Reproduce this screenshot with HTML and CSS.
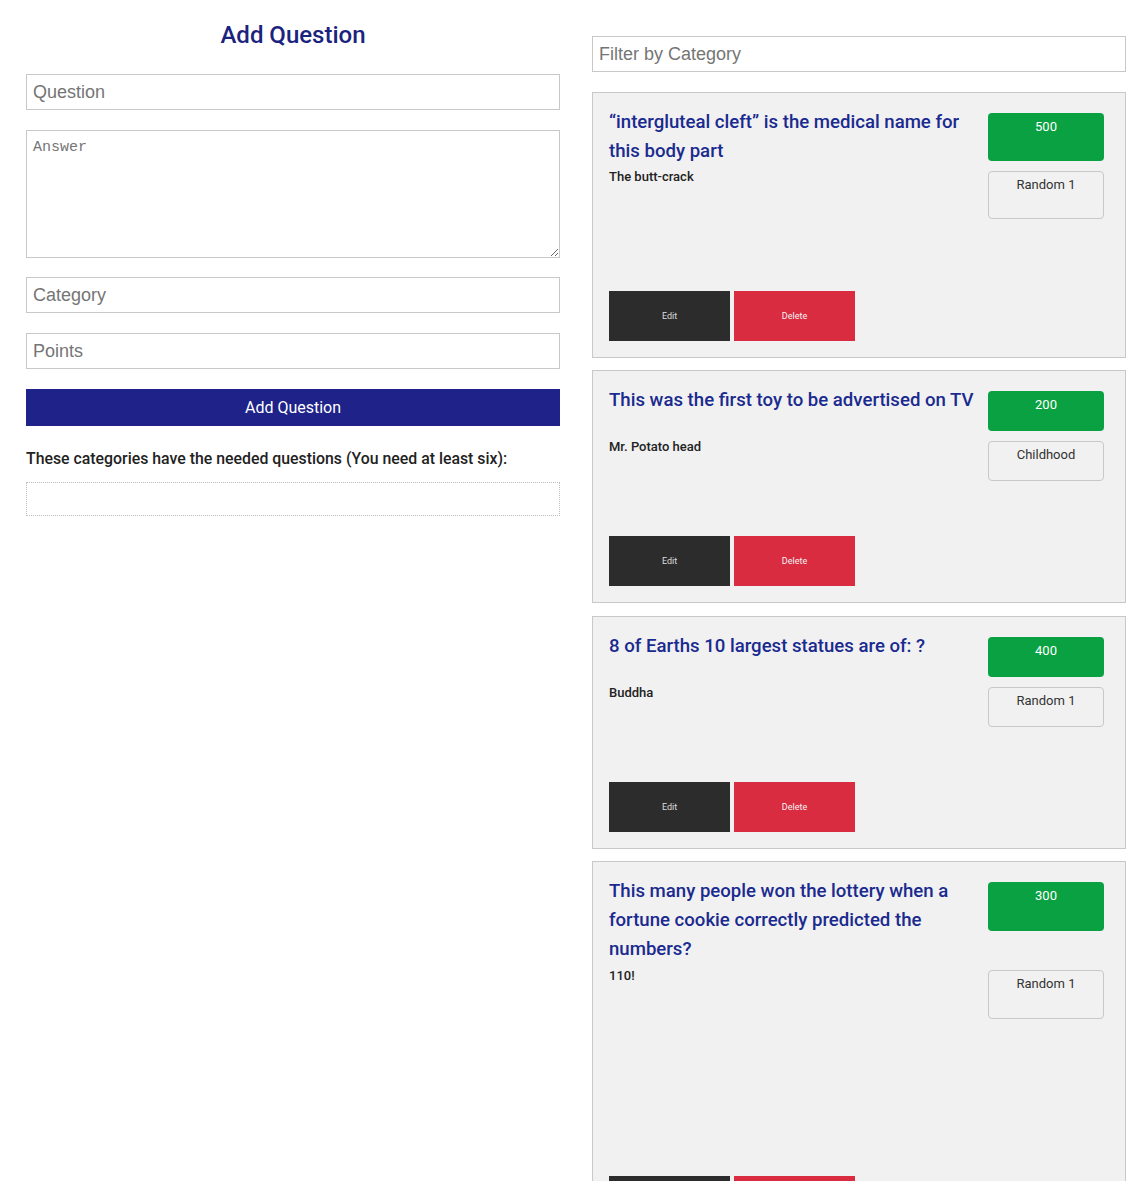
FILE: index.html
```html
<!DOCTYPE html>
<html>
<head>
<meta charset="utf-8">
<link rel="stylesheet" href="styles.css">
</head>
<body>
<div class="page">
  <div class="left">
    <h2 class="form-title">Add Question</h2>
    <input class="field" type="text" placeholder="Question">
    <textarea class="field area" placeholder="Answer"></textarea>
    <input class="field" type="text" placeholder="Category">
    <input class="field" type="text" placeholder="Points">
    <button class="add-btn">Add Question</button>
    <p class="needed">These categories have the needed questions (You need at least six):</p>
    <div class="cat-box"></div>
  </div>
  <div class="right">
    <input class="field filter" type="text" placeholder="Filter by Category">
    <div class="card">
      <div class="q-title">“intergluteal cleft” is the medical name for this body part</div>
      <div class="pts">500</div>
      <div class="ans">The butt-crack</div>
      <div class="cat">Random 1</div>
      <div class="spacer"></div>
      <div class="actions"><div class="edit">Edit</div><div class="del">Delete</div></div>
    </div>
    <div class="card">
      <div class="q-title">This was the first toy to be advertised on TV</div>
      <div class="pts">200</div>
      <div class="ans">Mr. Potato head</div>
      <div class="cat">Childhood</div>
      <div class="spacer"></div>
      <div class="actions"><div class="edit">Edit</div><div class="del">Delete</div></div>
    </div>
    <div class="card">
      <div class="q-title">8 of Earths 10 largest statues are of: ?</div>
      <div class="pts">400</div>
      <div class="ans">Buddha</div>
      <div class="cat">Random 1</div>
      <div class="spacer"></div>
      <div class="actions"><div class="edit">Edit</div><div class="del">Delete</div></div>
    </div>
    <div class="card">
      <div class="q-title">This many people won the lottery when a fortune cookie correctly predicted the numbers?</div>
      <div class="pts">300</div>
      <div class="ans">110!</div>
      <div class="cat">Random 1</div>
      <div class="spacer"></div>
      <div class="actions"><div class="edit">Edit</div><div class="del">Delete</div></div>
    </div>
  </div>
</div>
</body>
</html>
```
FILE: styles.css
```css
html, body {
  margin: 0;
  padding: 0;
  background: #fff;
  font-family: Roboto, "Liberation Sans", sans-serif;
  color: #222;
}
.page {
  display: grid;
  grid-template-columns: 534px 534px;
  column-gap: 32px;
  padding-left: 26px;
  align-items: start;
}
.left {
  display: flex;
  flex-direction: column;
}
.form-title {
  margin: 21px 0 25px;
  font-size: 24px;
  line-height: 28px;
  font-weight: 500;
  text-align: center;
  color: #1a237e;
}
.field {
  box-sizing: border-box;
  width: 100%;
  height: 36px;
  margin: 0 0 20px;
  padding: 0 6px;
  border: 1px solid #c8c8c8;
  background: #fff;
  font-family: "Liberation Sans", Arial, sans-serif;
  font-size: 18px;
  color: #222;
  outline: none;
}
.field::placeholder {
  color: #757575;
}
.area {
  height: 128px;
  padding: 8px 6px;
  font-family: "Liberation Mono", monospace;
  font-size: 15px;
  line-height: 17px;
  resize: vertical;
  margin-bottom: 19px;
}
.add-btn {
  height: 37px;
  border: none;
  background: #1e2289;
  color: #fff;
  font-family: Roboto, sans-serif;
  font-size: 16px;
  padding: 0;
}
.needed {
  margin: 23px 0 13px;
  font-size: 15.85px;
  line-height: 20px;
  font-weight: 500;
  color: #222;
}
.cat-box {
  height: 34px;
  box-sizing: border-box;
  border: 1px dotted #bdbdbd;
}
.right {
  display: flex;
  flex-direction: column;
  padding-top: 36px;
}
.filter {
  margin-bottom: 20px;
}
.card {
  display: grid;
  grid-template-columns: 1fr 126px;
  grid-auto-rows: 1fr;
  padding: 15px 16px 16px;
  border: 1px solid #c8c8c8;
  background: #f1f1f1;
  margin-bottom: 12.5px;
}
.q-title {
  font-size: 18.6px;
  line-height: 29.1px;
  font-weight: 500;
  color: #1a2a8f;
  grid-column: 1;
  grid-row: 1;
}
.pts, .cat {
  grid-column: 2;
  margin: 5px;
  max-height: 49px;
  box-sizing: border-box;
  padding-top: 6px;
  text-align: center;
  font-size: 13px;
  line-height: 16px;
  border-radius: 4px;
}
.pts {
  grid-row: 1;
  background: #09a142;
  color: #fff;
}
.cat {
  grid-row: 2;
  border: 1px solid #c8c8c8;
  padding-top: 5px;
  color: #333;
}
.ans {
  grid-column: 1;
  grid-row: 2;
  font-size: 13px;
  line-height: 22px;
  font-weight: 500;
  color: #222;
}
.spacer {
  grid-column: 1;
  grid-row: 3;
}
.actions {
  grid-column: 1;
  grid-row: 4;
  align-self: end;
  display: flex;
  gap: 4px;
}
.edit, .del {
  width: 121px;
  height: 50px;
  display: flex;
  align-items: center;
  justify-content: center;
  font-size: 9px;
}
.edit {
  background: #2c2c2c;
  color: #ddd;
}
.del {
  background: #d92c40;
  color: #f3f3f3;
}
```
